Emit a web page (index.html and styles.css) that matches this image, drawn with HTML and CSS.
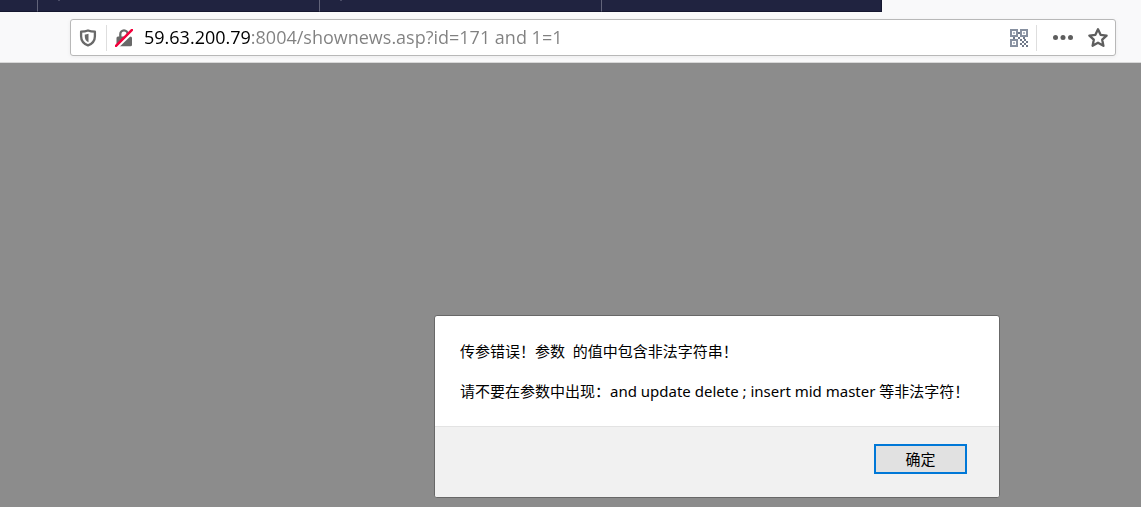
FILE: index.html
```html
<!DOCTYPE html>
<html lang="zh-CN">
<head>
    <meta charset="UTF-8">
    <meta name="viewport" content="width=device-width, initial-scale=1.0">
    <title>59.63.200.79:8004</title>
    <link rel="stylesheet" href="styles.css">
</head>
<body>
    <div class="tab-strip">
        <div class="tab tab-first"></div>
        <div class="tab tab-page"></div>
        <div class="tab tab-page"></div>
        <div class="tab tab-last"></div>
    </div>

    <header class="toolbar">
        <form class="url-bar">
            <button type="button" class="icon-button" aria-label="Tracking protection">
                <svg class="icon" viewBox="0 0 18 18">
                    <path d="M9 1.500c2.200.9 4.500 1.200 6.900 1.200v4.500c0 4.600-2.400 7.500-6.900 9.200-4.500-1.700-6.900-4.600-6.900-9.200V2.700c2.400 0 4.700-.3 6.900-1.200z" fill="none" stroke="#696969" stroke-width="2.300" stroke-linejoin="round"/>
                    <path d="M9.500 4.800v8.500c-2.500-1.300-3.700-3.100-3.700-5.800V5.500C7 5.500 8.500 5.300 9.500 4.800z" fill="#696969"/>
                </svg>
            </button>
            <span class="divider"></span>
            <button type="button" class="icon-button icon-lock" aria-label="Connection is not secure">
                <svg class="icon" viewBox="0 0 18 18">
                    <path d="M5.300 9V5.300a3.700 3.900 0 0 1 7.400 0V9" fill="none" stroke="#696969" stroke-width="2.300"/>
                    <rect x="1.500" y="7.500" width="15.500" height="9.700" rx="1.500" fill="#696969"/>
                    <path d="M2 18.500L18.700 2.200" stroke="#fff" stroke-width="2.500"/>
                    <path d="M1 16.800L17 .9" stroke="#f4003c" stroke-width="2.500" stroke-linecap="round"/>
                </svg>
            </button>
            <input class="url-input" type="text" aria-label="Address" spellcheck="false" value="59.63.200.79:8004/shownews.asp?id=171 and 1=1">
            <button type="button" class="icon-button" aria-label="QR code">
                <svg class="icon" viewBox="0 0 18 18">
                    <g fill="none" stroke="#8790a0" stroke-width="2">
                        <rect x="1" y="1" width="6" height="6"/>
                        <rect x="11" y="1" width="6" height="6"/>
                        <rect x="1" y="11" width="6" height="6"/>
                    </g>
                    <path d="M3 3h2v2H3zM13 3h2v2h-2zM3 13h2v2H3z" fill="#b4bac5"/>
                    <path d="M8 3h2v2H8zM3 8h2v2H3zM8 8h2v2H8zM13 8h2v2h-2zM10 10h2v2h-2zM14 10h2v2h-2zM12 12h2v2h-2zM16 12h2v2h-2zM10 14h2v2h-2zM14 14h2v2h-2zM12 16h2v2h-2zM16 16h2v2h-2z" fill="#6f7889"/>
                </svg>
            </button>
            <span class="divider divider-right"></span>
            <button type="button" class="icon-button icon-more" aria-label="Page actions">
                <svg class="icon-wide" viewBox="0 0 22 18">
                    <g fill="#5e5e5e">
                        <circle cx="3.500" cy="8.500" r="2.500"/>
                        <circle cx="11" cy="8.500" r="2.500"/>
                        <circle cx="18.500" cy="8.500" r="2.500"/>
                    </g>
                </svg>
            </button>
            <button type="button" class="icon-button" aria-label="Bookmark this page">
                <svg class="icon-star" viewBox="0 0 20 20">
                    <path d="M10 1.300l2.600 5.500 6 .8-4.400 4.100 1.200 6.100-5.400-3.100-5.400 3.100 1.200-6.100-4.400-4.100 6-.8z" fill="none" stroke="#5e5e5e" stroke-width="2.300" stroke-linejoin="round"/>
                </svg>
            </button>
        </form>
    </header>

    <main class="page">
        <div class="dialog" role="alertdialog" aria-modal="true" aria-describedby="message">
            <div class="dialog-body" id="message">
                <p class="message">传参错误！参数&nbsp; 的值中包含非法字符串！</p>
                <p class="message">请不要在参数中出现：and update delete ; insert mid master 等非法字符！</p>
            </div>
            <div class="dialog-footer">
                <button type="button" class="ok-button">确定</button>
            </div>
        </div>
    </main>
</body>
</html>
```

FILE: styles.css
```css
* {
    box-sizing: border-box;
    margin: 0;
    padding: 0;
}

body {
    display: flex;
    flex-direction: column;
    min-height: 100vh;
    background: #8c8c8c;
    font-family: "Noto Sans", "Noto Sans CJK SC", sans-serif;
}

.tab-strip {
    display: flex;
    height: 12px;
    background: #f9f9fa;
}

.tab {
    background: #202340;
    border-right: 1px solid #62647a;
    border-bottom: 1px solid #15172f;
}

.tab-first {
    width: 38px;
}

.tab-page {
    width: 282px;
    padding-left: 20px;
}

/* lower edge of the tab's icon */
.tab-page::before {
    content: "";
    display: block;
    width: 2px;
    height: 1px;
    background: #4a4c66;
}

.tab-last {
    width: 280px;
    border-right-color: #15172f;
}

.toolbar {
    padding: 7px 25px 6px 70px;
    background: #f9f9fa;
    border-bottom: 1px solid #d8d8d8;
}

.url-bar {
    display: flex;
    align-items: center;
    height: 37px;
    padding: 0 7px 0 8px;
    background: #fff;
    border: 1px solid #b8b8b8;
    border-radius: 3px;
    box-shadow: 0 1px 4px rgba(0, 0, 0, 0.06);
}

.icon-button {
    display: flex;
    background: none;
    border: none;
    cursor: pointer;
}

.icon-lock {
    margin-right: 11px;
}

.icon-more {
    margin: 0 14px 0 7px;
}

.icon {
    width: 18px;
    height: 18px;
}

.icon-wide {
    width: 22px;
    height: 18px;
}

.icon-star {
    width: 20px;
    height: 20px;
}

.divider {
    width: 1px;
    height: 26px;
    margin: 0 8px 0 9px;
    background: #dedede;
}

.divider-right {
    margin-left: 8px;
}

/* host in black, the rest of the address in grey */
.url-input {
    flex: 1;
    min-width: 0;
    height: 33px;
    padding-bottom: 2px;
    border: none;
    outline: none;
    font-family: "Open Sans", sans-serif;
    font-size: 18px;
    color: transparent;
    background: linear-gradient(to right, #000 106px, #808080 106px);
    -webkit-background-clip: text;
    background-clip: text;
    caret-color: #0c0c0d;
}

.page {
    display: flex;
    flex: 1;
    align-items: flex-end;
    justify-content: flex-end;
    padding: 9px 141px 9px 20px;
}

.dialog {
    width: 566px;
    background: #fff;
    border: 1px solid #686868;
    border-radius: 3px;
    overflow: hidden;
}

.dialog-body {
    padding: 25px 20px 25px 25px;
}

.message {
    font-size: 15px;
    line-height: 20px;
    color: #000;
}

.message + .message {
    margin-top: 20px;
}

.dialog-footer {
    display: flex;
    justify-content: flex-end;
    padding: 17px 32px 23px;
    background: #f1f1f1;
    border-top: 1px solid #e3e3e3;
}

.ok-button {
    width: 93px;
    height: 30px;
    background: #e1e1e1;
    border: 2px solid #0078d7;
    font-family: inherit;
    font-size: 15px;
    line-height: 20px;
    color: #000;
    cursor: pointer;
}
```
